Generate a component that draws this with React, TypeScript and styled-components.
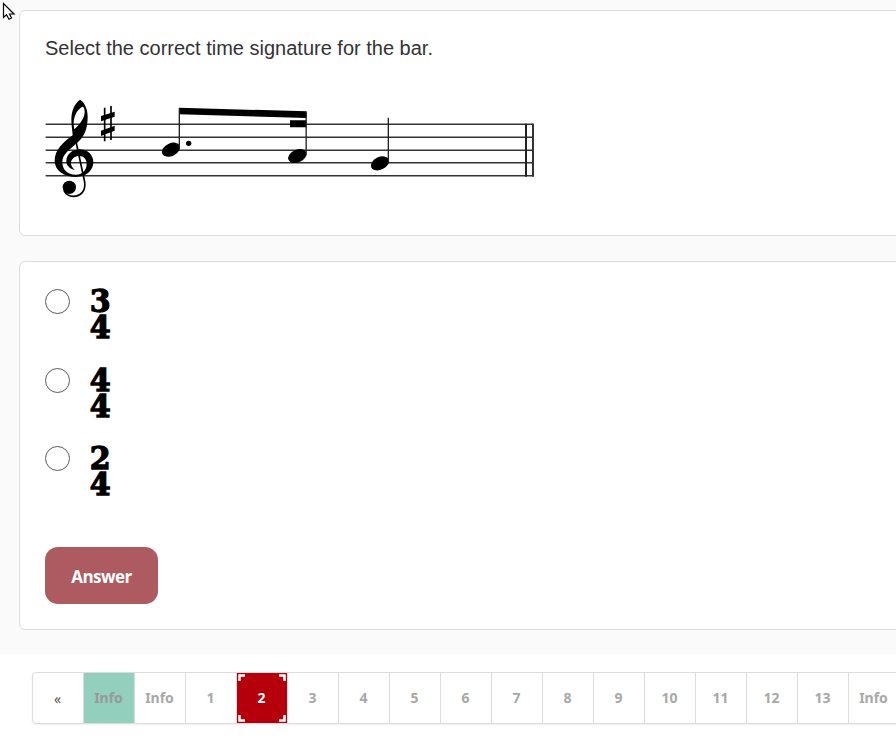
import React from 'react';
import styled, { createGlobalStyle, css } from 'styled-components';

const Global = createGlobalStyle`
  * { box-sizing: border-box; }
  html, body { margin: 0; background: #fff; overflow: hidden; }
`;

const Page = styled.div`
  position: relative;
  width: 100vw;
  height: 740px;
  overflow: hidden;
  font-family: 'Open Sans', 'Noto Sans', sans-serif;
`;

const Quiz = styled.main`
  display: flex;
  flex-direction: column;
  gap: 25px;
  height: 654px;
  padding: 10px 0 0 19px;
  background: #fafafa;
`;

const Card = styled.section<{ $height: number }>`
  width: 920px;
  height: ${p => p.$height}px;
  padding: 25px;
  border: 1px solid #dcdcdc;
  border-radius: 6px;
  background: #fff;
`;

const Question = styled.p`
  margin: 0;
  height: 54px;
  font: 20px/24px 'Liberation Sans', Arial, sans-serif;
  color: #333;
`;

const Score = styled.svg`
  display: block;
  width: 500px;
  height: 115px;
  margin-left: -5px;
`;

const Options = styled.div`
  display: flex;
  flex-direction: column;
  height: 260px;
`;

const Option = styled.label`
  display: flex;
  gap: 17px;
  height: 78.5px;
`;

const Radio = styled.input`
  appearance: none;
  width: 25px;
  height: 25px;
  margin: 2px 0 0;
  border: 1px solid #5c5c5c;
  border-radius: 50%;
  background: #fff;
`;

const Meter = styled.svg`
  width: 28px;
  height: 56px;
  overflow: visible;
`;

const AnswerButton = styled.button`
  display: block;
  width: 113px;
  height: 57px;
  padding: 3px 0 0;
  border: 0;
  border-radius: 13px;
  background: #ad5a60;
  color: #fff;
  font: 700 17px/24px 'Open Sans', sans-serif;
  letter-spacing: -0.5px;
`;

const Pager = styled.nav`
  display: flex;
  width: 920px;
  height: 52px;
  margin: 18px 0 0 32px;
  border: 1px solid #dcdcdc;
  border-radius: 4px;
  box-shadow: 0 1px 2px rgba(34, 36, 38, 0.08);
`;

type Kind = 'arrow' | 'done' | 'active' | 'plain';

const PageItem = styled.a<{ $kind: Kind }>`
  position: relative;
  flex: 0 0 51px;
  display: flex;
  align-items: center;
  justify-content: center;
  height: 50px;
  padding-right: 1px;
  border-right: 1px solid #dcdcdc;
  color: #a8a8a8;
  font: 700 14px/20px 'Noto Sans', sans-serif;
  ${p => p.$kind === 'arrow' && css`color: #555; font-weight: 400; padding-top: 1px;`}
  ${p => p.$kind === 'done' && css`background: #92cfbc; color: #999;`}
  ${p => p.$kind === 'active' && css`background: #b5000c; color: #fff;`}
`;

const Corners = styled.svg`
  position: absolute;
  inset: 0;
  width: 50px;
  height: 50px;
`;

const Cursor = styled.svg`
  position: absolute;
  left: 2px;
  top: 2px;
  width: 14px;
  height: 20px;
`;

const NoteHead = ({ x, y }: { x: number; y: number }) => (
  <ellipse cx={x} cy={y} rx="29" ry="19" transform={`rotate(-25 ${x} ${y})`} />
);

const Staff = () => (
  <Score viewBox="0 0 1500 345" role="img" aria-label="Bar of music">
    <g stroke="#333" strokeWidth="4.500">
      {[103, 142, 181, 218, 257].map(y => <path key={y} d={`M17 ${y}H1480`} />)}
    </g>
    <path
      fillRule="evenodd"
      d="M98 136C68 158 44 180 44 213C44 241 72 261 108 261C140 261 160 240 160 217C160 195 143 178 120 178C96 178 79 195 79 213C79 227 90 237 104 240C95 231 92 224 93 217C95 206 105 198 117 198C132 198 140 208 140 222C140 242 126 254 108 254C80 254 67 238 67 216C67 192 87 180 112 158C134 139 143 115 143 80C143 55 132 35 120 29C104 40 94 62 94 88C94 105 97 120 98 136ZM128 50C115 55 101 75 101 100Q101 110 103 118C121 103 134 82 134 66C134 58 132 51 128 50Z"
    />
    <path d="M106 145L134 276C138 304 121 319 100 319Q81 319 72 302" fill="none" stroke="#000" strokeWidth="5" />
    <circle cx="88" cy="292" r="20" />
    <path d="M194 53V154M213 48V150" stroke="#000" strokeWidth="5" />
    <path d="M183 78L224 65V80L183 94ZM183 122L224 107V122L183 138Z" />
    <NoteHead x={393} y={179} />
    <NoteHead x={772} y={198} />
    <NoteHead x={1020} y={220} />
    <circle cx="446" cy="160" r="8" />
    <path d="M417 53L800 64V84L417 73ZM750 91H799V112H750Z" />
    <path d="M418 55V176M798.500 66V194M1045 83V216" stroke="#222" strokeWidth="4" />
    <path d="M1458 101V260" stroke="#222" strokeWidth="6" />
    <path d="M1479 101V260" stroke="#333" strokeWidth="6" />
  </Score>
);

const TimeSignature = ({ top }: { top: string }) => (
  <Meter viewBox="0 0 28 56">
    <g fontFamily="DejaVu Serif" fontWeight="700" fontSize="32" textAnchor="middle" stroke="#000" strokeWidth="1.300">
      <text transform="translate(13.200 24.700) scale(.94 1)">{top}</text>
      <text transform="translate(13.200 50.700) scale(.94 1)">4</text>
    </g>
  </Meter>
);

const pages = ['«', 'Info', 'Info', '1', '2', '3', '4', '5', '6', '7', '8', '9', '10', '11', '12', '13', 'Info'];

const kindOf = (i: number): Kind => (i === 0 ? 'arrow' : i === 1 ? 'done' : i === 4 ? 'active' : 'plain');

export default function App() {
  return (
    <Page>
      <Global />
      <Quiz>
        <Card $height={226}>
          <Question>Select the correct time signature for the bar.</Question>
          <Staff />
        </Card>
        <Card $height={369}>
          <Options>
            {['3', '4', '2'].map(n => (
              <Option key={n}>
                <Radio type="radio" name="meter" />
                <TimeSignature top={n} />
              </Option>
            ))}
          </Options>
          <AnswerButton>Answer</AnswerButton>
        </Card>
      </Quiz>
      <Pager>
        {pages.map((label, i) => (
          <PageItem key={i} $kind={kindOf(i)}>
            {label}
            {kindOf(i) === 'active' && (
              <Corners viewBox="0 0 50 50">
                <path
                  d="M2.500 8V2.500H8M42 2.500H47.500V8M2.500 42V47.500H8M42 47.500H47.500V42"
                  fill="none"
                  stroke="#fff"
                  strokeWidth="2.500"
                />
              </Corners>
            )}
          </PageItem>
        ))}
      </Pager>
      <Cursor viewBox="0 0 14 20">
        <path d="M1.500 1.500V15.500L4.500 12.800L7 17.300L9.500 16L7.500 12H12Z" fill="#fff" stroke="#000" strokeWidth="1.200" />
      </Cursor>
    </Page>
  );
}
